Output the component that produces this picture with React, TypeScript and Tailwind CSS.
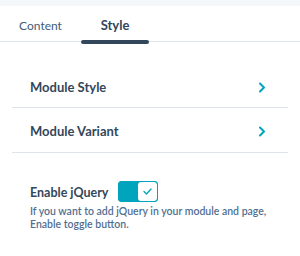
import React from "react";

function Chevron() {
  return (
    <svg width="8" height="11" viewBox="0 0 8 11" fill="none">
      <path d="M2 1.5 L6 5.5 L2 9.5" stroke="#00a4bd" strokeWidth="2" strokeLinecap="round" strokeLinejoin="round" />
    </svg>
  );
}

export default function App() {
  return (
    <div className="w-[300px] h-[256px] bg-white text-[#33475b]" style={{ fontFamily: "Lato, 'Noto Sans', sans-serif" }}>
      <div className="h-[6px] bg-[#f5f8fa]" />
      <div className="relative flex h-[36px] border-b border-[#dfe3eb]">
        <div className="w-[81px] flex items-center justify-center text-[12px] text-[#425b76] pt-[5px]">Content</div>
        <div className="relative w-[68px] flex items-center justify-center text-[13px] font-bold pt-[5px]">
          Style
          <div className="absolute left-0 right-0 bottom-[-3px] h-[4px] rounded-full bg-[#33475b]" />
        </div>
      </div>
      <div className="px-[12px] pt-[23px]">
        <div className="flex items-center justify-between h-[43px] pl-[18px] pr-[22px] border-b border-[#dfe3eb] pt-[3px]">
          <span className="text-[13px] font-bold">Module Style</span>
          <Chevron />
        </div>
        <div className="flex items-center justify-between h-[45px] pl-[18px] pr-[22px] border-b border-[#dfe3eb] pt-[3px]">
          <span className="text-[13px] font-bold">Module Variant</span>
          <Chevron />
        </div>
        <div className="pl-[18px] pt-[28px]">
          <div className="flex items-center gap-[10px]">
            <span className="text-[12.5px] font-bold pt-[3px]">Enable jQuery</span>
            <div className="flex w-[40px] h-[21px] rounded-[3px] border border-[#00a4bd] bg-[#00a4bd] overflow-hidden">
              <div className="w-[19px]" />
              <div className="flex-1 bg-white rounded-[3px] flex items-center justify-center">
                <svg width="9" height="7" viewBox="0 0 9 7" fill="none">
                  <path d="M1 3.5 L3.5 6 L8 1" stroke="#00a4bd" strokeWidth="1.3" strokeLinecap="round" strokeLinejoin="round" />
                </svg>
              </div>
            </div>
          </div>
          <p className="mt-[2px] text-[10.5px] leading-[13px] font-semibold text-[#516f90]">
            If you want to add jQuery in your module and page,
            <br />
            Enable toggle button.
          </p>
        </div>
      </div>
    </div>
  );
}
